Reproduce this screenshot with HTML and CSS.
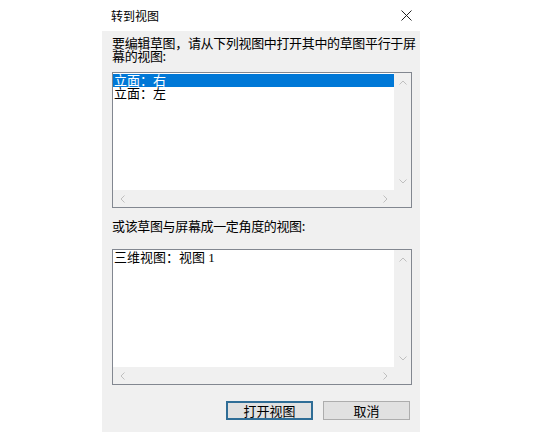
FILE: index.html
```html
<!DOCTYPE html>
<html lang="zh-CN">
<head>
    <meta charset="UTF-8">
    <title>转到视图</title>
    <link rel="stylesheet" href="styles.css">
</head>
<body>
    <div class="dialog">
        <div class="titlebar">
            <span class="title">转到视图</span>
            <svg class="close" width="11" height="11" viewBox="0 0 11 11">
                <path d="M0.5 0.5 L10.5 10.5 M10.5 0.5 L0.5 10.5" stroke="#222" stroke-width="1" fill="none"/>
            </svg>
        </div>
        <div class="content">
            <p class="prompt first">要编辑草图，请从下列视图中打开其中的草图平行于屏<br>幕的视图:</p>
            <div class="listbox">
                <ul class="items">
                    <li class="selected">立面：右</li>
                    <li>立面：左</li>
                </ul>
                <div class="vscroll">
                    <svg width="8" height="5" viewBox="0 0 8 5"><polyline points="0.5,4.5 4,1 7.5,4.5" class="chev"/></svg>
                    <svg width="8" height="5" viewBox="0 0 8 5"><polyline points="0.5,0.5 4,4 7.5,0.5" class="chev"/></svg>
                </div>
                <div class="hscroll">
                    <svg width="5" height="8" viewBox="0 0 5 8"><polyline points="4.5,0.5 1,4 4.5,7.5" class="chev"/></svg>
                    <svg width="5" height="8" viewBox="0 0 5 8"><polyline points="0.5,0.5 4,4 0.5,7.5" class="chev"/></svg>
                </div>
                <div class="corner"></div>
            </div>
            <p class="prompt second">或该草图与屏幕成一定角度的视图:</p>
            <div class="listbox lower">
                <ul class="items">
                    <li>三维视图：视图 1</li>
                </ul>
                <div class="vscroll">
                    <svg width="8" height="5" viewBox="0 0 8 5"><polyline points="0.5,4.5 4,1 7.5,4.5" class="chev"/></svg>
                    <svg width="8" height="5" viewBox="0 0 8 5"><polyline points="0.5,0.5 4,4 7.5,0.5" class="chev"/></svg>
                </div>
                <div class="hscroll">
                    <svg width="5" height="8" viewBox="0 0 5 8"><polyline points="4.5,0.5 1,4 4.5,7.5" class="chev"/></svg>
                    <svg width="5" height="8" viewBox="0 0 5 8"><polyline points="0.5,0.5 4,4 0.5,7.5" class="chev"/></svg>
                </div>
                <div class="corner"></div>
            </div>
            <div class="buttons">
                <button class="btn default">打开视图</button>
                <button class="btn">取消</button>
            </div>
        </div>
    </div>
</body>
</html>
```

FILE: styles.css
```css
* {
    margin: 0;
    padding: 0;
    box-sizing: border-box;
}

body {
    font-family: "Noto Sans CJK SC", "Noto Sans", sans-serif;
    font-size: 13px;
    color: #000;
    background-color: #fff;
    height: 432px;
    overflow: hidden;
}

.dialog {
    margin-left: 102px;
    width: 318px;
    height: 432px;
    display: flex;
    flex-direction: column;
}

.titlebar {
    height: 31px;
    background-color: #fff;
    display: flex;
    align-items: center;
    justify-content: space-between;
    padding: 0 8px 1px 9px;
}

.title {
    font-size: 12px;
}

.close {
    display: block;
}

.content {
    flex: 1;
    background-color: #f0f0f0;
    padding: 5px 8px 0 10px;
    display: flex;
    flex-direction: column;
}

.prompt {
    line-height: 13px;
    white-space: nowrap;
    letter-spacing: -0.35px;
}

.prompt.second {
    margin-top: 11px;
}

.listbox {
    margin-top: 10px;
    width: 300px;
    height: 136px;
    border: 1px solid #828790;
    background-color: #fff;
    display: grid;
    grid-template-columns: 1fr 17px;
    grid-template-rows: 1fr 17px;
}

.listbox.lower {
    margin-top: 17px;
}

.items {
    list-style: none;
    padding-top: 1px;
    font-family: "Liberation Serif", "Noto Sans CJK SC", serif;
}

.items li {
    height: 13px;
    line-height: 13px;
    padding-left: 1px;
    overflow: hidden;
}

.items li.selected {
    background-color: #0078d7;
    color: #fff;
}

.vscroll {
    background-color: #f0f0f0;
    display: flex;
    flex-direction: column;
    justify-content: space-between;
    align-items: center;
    padding: 7px 0 6px;
}

.hscroll {
    background-color: #f0f0f0;
    display: flex;
    justify-content: space-between;
    align-items: center;
    padding: 0 6px 0 7px;
}

.corner {
    background-color: #f0f0f0;
}

.chev {
    fill: none;
    stroke: #bfbfbf;
    stroke-width: 1;
}

.buttons {
    margin-top: 16px;
    display: flex;
    justify-content: flex-end;
    gap: 10px;
    padding-right: 2px;
}

.btn {
    width: 87px;
    height: 19px;
    font-family: "Noto Sans CJK SC", sans-serif;
    font-size: 13px;
    line-height: 15px;
    background-color: #e1e1e1;
    border: 1px solid #adadad;
    color: #000;
}

.btn.default {
    border: 2px solid #2f6d96;
}
```
